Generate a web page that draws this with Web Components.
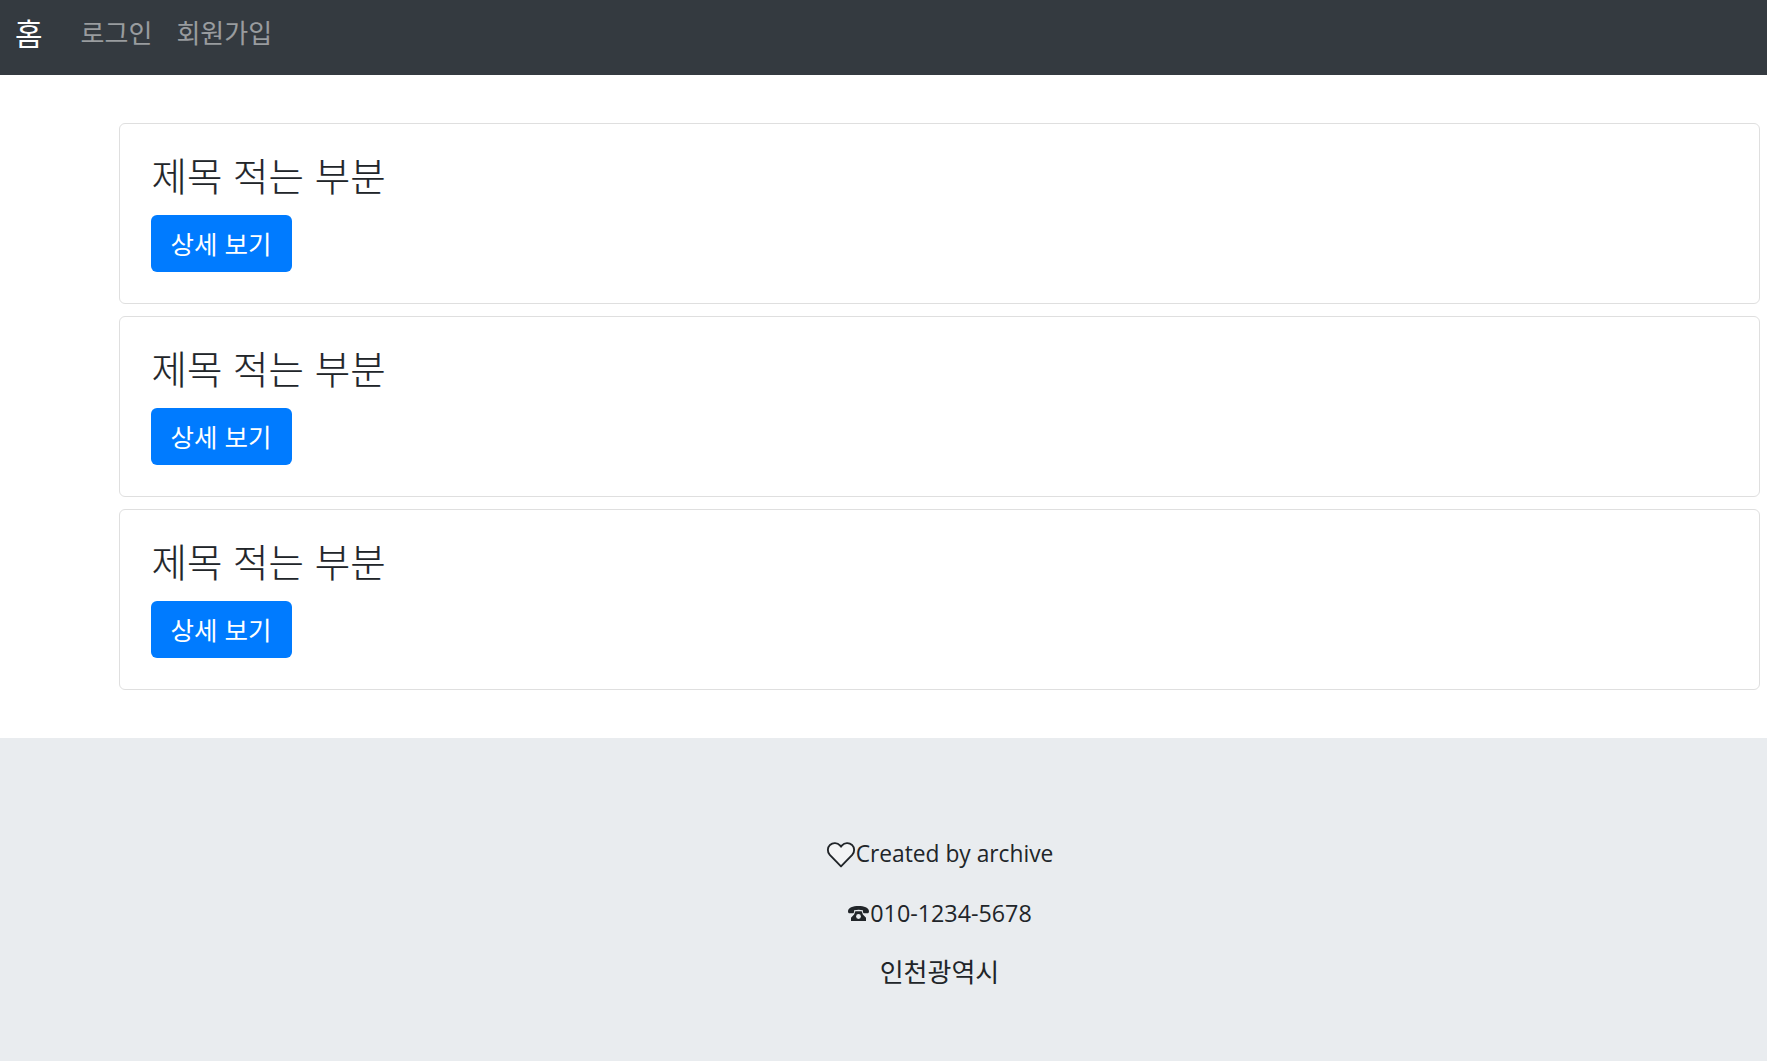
<!DOCTYPE html>
<html lang="ko"><head><meta charset="utf-8"><title>홈</title>
<style>
html,body{margin:0;padding:0}
body{font-family:"Open Sans","Noto Sans CJK KR",sans-serif;color:#212529;background:#fff}
</style></head><body>
<app-nav></app-nav>
<main-list>
<info-card heading="제목 적는 부분" action="상세 보기"></info-card>
<info-card heading="제목 적는 부분" action="상세 보기"></info-card>
<info-card heading="제목 적는 부분" action="상세 보기"></info-card>
</main-list>
<app-footer></app-footer>
<script>
const KR='"Noto Sans CJK KR","Noto Sans",sans-serif';
class AppNav extends HTMLElement{constructor(){super();this.attachShadow({mode:'open'}).innerHTML=`<style>
:host{display:flex;align-items:center;height:75px;background:#343a40;padding:0 15px;box-sizing:border-box;font-family:${KR}}
a{text-decoration:none;display:block;line-height:1;margin-top:-12px}
.brand{color:#fff;font-size:30px;margin-right:38px}
.link{color:rgba(255,255,255,.5);font-size:26px;margin-right:24px}
</style><a class="brand" href="#">홈</a><a class="link" href="#">로그인</a><a class="link" href="#">회원가입</a>`}}
class MainList extends HTMLElement{constructor(){super();this.attachShadow({mode:'open'}).innerHTML=`<style>
:host{display:flex;flex-direction:column;gap:12px;padding:48px 7px 48px 119px}
</style><slot></slot>`}}
class InfoCard extends HTMLElement{constructor(){super();this.attachShadow({mode:'open'}).innerHTML=`<style>
:host{display:block;height:181px;box-sizing:border-box;border:1.5px solid #dfdfdf;border-radius:6px;padding:30px 30.500px;font-family:${KR}}
h3{margin:0 0 23px;padding:2px 0 0 1px;font-size:38.500px;font-weight:300;line-height:36px;color:#212529;-webkit-text-stroke:.2px #212529;white-space:nowrap}
button{display:block;width:141px;height:57px;margin:0;border:0;border-radius:6px;background:#007bff;color:#fff;font:400 25.500px ${KR};padding:0 0 2px;line-height:1;cursor:pointer}
</style><h3></h3><button type="button"></button>`;
this.shadowRoot.querySelector('h3').textContent=this.getAttribute('heading');
this.shadowRoot.querySelector('button').textContent=this.getAttribute('action');}}
class AppFooter extends HTMLElement{constructor(){super();this.attachShadow({mode:'open'}).innerHTML=`<style>
:host{display:flex;flex-direction:column;align-items:center;height:323px;box-sizing:border-box;background:#e9ecef;padding:98px 7px 0 119px;font-size:23px;color:#212529;font-family:"Open Sans","Noto Sans CJK KR",sans-serif}
p{margin:0 0 23px;line-height:36px;height:36px;display:flex;align-items:center;white-space:nowrap}
svg{display:block;flex:none}
.a{font-size:22.750px}
.b{font-size:23.300px}
.kr{font-family:${KR};font-size:26px;margin-top:-1px}
</style>
<p class="a"><svg width="30" height="27" viewBox="0 0 28 26"><path d="M14 24.500 3.200 13.300C.6 10.500.8 6.300 3.400 3.800 6.200 1.300 10.500 1.500 13 4.300L14 5.500l1-1.200c2.500-2.800 6.800-3 9.600-.5 2.600 2.500 2.800 6.700.2 9.500Z" fill="#f3f4f5" stroke="#212529" stroke-width="1.800" stroke-linejoin="round"/></svg>Created by archive</p>
<p class="b"><svg width="23" height="17" viewBox="0 0 23 17"><path d="M1 6.500C1 2.500 6 1 11.500 1S22 2.500 22 6.500c0 1.200-.6 1.800-1.600 1.800h-3c-1 0-1.500-.6-1.500-1.500V5.300c-2.800-.7-5.600-.7-8.800 0v1.500c0 .9-.5 1.500-1.500 1.500h-3C1.600 8.300 1 7.700 1 6.500ZM8.300 6.300h6.400l1.200 3.200 3.100 3.300V16H4v-3.200l3.100-3.300Z" fill="#212529"/><circle cx="11.500" cy="11.500" r="2.400" fill="#e9ecef"/></svg>010-1234-5678</p>
<p class="kr">인천광역시</p>`}}
customElements.define('app-nav',AppNav);customElements.define('main-list',MainList);customElements.define('info-card',InfoCard);customElements.define('app-footer',AppFooter);
</script></body></html>
